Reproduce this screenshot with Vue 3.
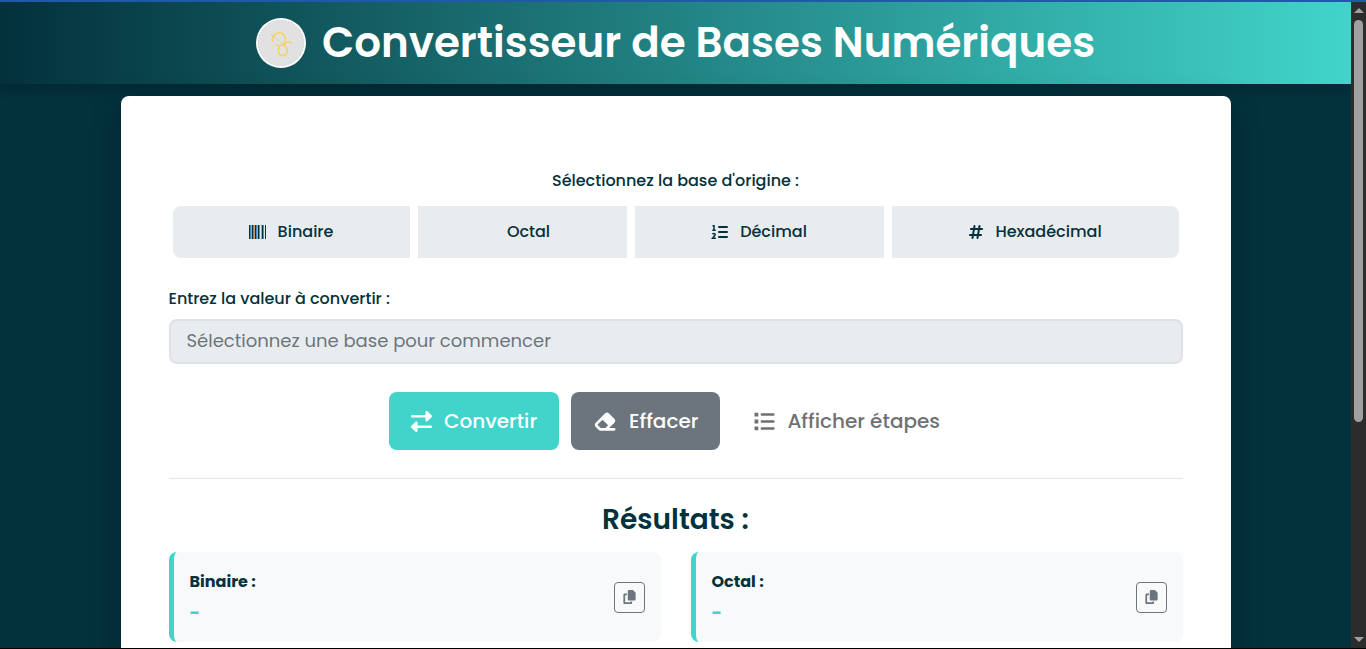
<template>
  <div class="window">
    <div class="page">
      <header class="header">
        <svg class="logo" viewBox="0 0 50 50" aria-hidden="true">
          <circle cx="25" cy="25" r="25" fill="#fff" />
          <circle cx="25" cy="25" r="22.8" fill="#e1e1e1" stroke="#b4bdc0" stroke-width="0.6" stroke-dasharray="2 1" />
          <g fill="none" stroke="#f6d35c" stroke-width="1.5">
            <path d="M17 24c-2-5 2-9.500 6.500-9.200 5 .4 7.500 6 5 10.200-2 3-6 3.500-8.500 1.500" />
            <path d="M23.500 28.500c-2.500 4-1 9.200 3.200 9.200 4.500 0 6-5 3.500-8.700" />
            <path d="M29 29c-1-5 4.500-7 6.500-3" />
          </g>
          <path d="M15 16l14 12" stroke="#c4c6c6" stroke-width="1" stroke-dasharray="2 2" />
        </svg>
        <h1 class="title">Convertisseur de Bases Numériques</h1>
      </header>

      <main class="card">
        <p id="base-label" class="base-label">Sélectionnez la base d'origine :</p>
        <div class="base-group" role="group" aria-labelledby="base-label">
          <button
            v-for="base in bases"
            :key="base.id"
            type="button"
            class="base-btn"
            @click="selected = base"
          >
            <svg v-if="base.id === 'bin'" class="base-icon" viewBox="0 0 18 14" aria-hidden="true">
              <path d="M0 0h1v14H0zM3 0h1v14H3zM6 0h1v14H6zM9 0h1v14H9zM13 0h1v14h-1zM16 0h1v14h-1z" fill="#03313c" />
              <path d="M2 0h1v14H2zM5 0h1v14H5zM8 0h1v14H8zM12 0h1v14h-1z" fill="#d09a68" />
              <path d="M1 0h1v14H1zM4 0h1v14H4zM7 0h1v14H7zM10 0h1v14h-1zM14 0h1v14h-1z" fill="#3e93c8" />
            </svg>
            <span v-else-if="base.id === 'oct'" class="base-icon empty"></span>
            <svg v-else-if="base.id === 'dec'" class="base-icon" viewBox="0 0 18 14" aria-hidden="true">
              <g fill="none" stroke="currentColor">
                <path d="M8 2h8M8 7h8M8 12h8" stroke-width="2" stroke-linecap="round" />
                <path d="M1.500 .8h1.500v4.500M1.300 5.300h3.400M1.500 9.300c1-1.200 3-.8 2.600.6L1.500 13.200h3.400" stroke-width="1.500" />
              </g>
            </svg>
            <svg v-else class="base-icon hash" viewBox="0 0 448 512" aria-hidden="true">
              <path fill="currentColor" d="M181.3 32.4c17.4 2.9 29.2 19.4 26.3 36.8L197.8 128h95.1l11.5-69.3c2.9-17.4 19.4-29.2 36.8-26.3s29.2 19.4 26.3 36.8L357.8 128H416c17.7 0 32 14.3 32 32s-14.3 32-32 32H347.1L325.8 320H384c17.7 0 32 14.3 32 32s-14.3 32-32 32H315.1l-11.5 69.3c-2.9 17.4-19.4 29.2-36.8 26.3s-29.2-19.4-26.3-36.8l9.8-58.7H155.1l-11.5 69.3c-2.9 17.4-19.4 29.2-36.8 26.3s-29.2-19.4-26.3-36.8L90.2 384H32c-17.7 0-32-14.3-32-32s14.3-32 32-32h68.9l21.3-128H64c-17.7 0-32-14.3-32-32s14.3-32 32-32h68.9l11.5-69.3c2.9-17.4 19.4-29.2 36.8-26.3zM187.1 192L165.8 320h95.1l21.3-128H187.1z" />
            </svg>
            <span>{{ base.name }}</span>
          </button>
        </div>

        <label class="value-label" for="value">Entrez la valeur à convertir :</label>
        <input
          id="value"
          v-model="value"
          class="value-input"
          type="text"
          :disabled="!selected"
          :placeholder="selected ? 'Entrez une valeur' : 'Sélectionnez une base pour commencer'"
        />

        <div class="actions">
          <button type="button" class="action convert">
            <svg class="action-icon" viewBox="0 0 512 512" aria-hidden="true">
              <path fill="currentColor" d="M32 96l320 0V32c0-12.9 7.8-24.6 19.8-29.6s25.7-2.2 34.9 6.9l96 96c6 6 9.4 14.1 9.4 22.6s-3.4 16.6-9.4 22.6l-96 96c-9.2 9.2-22.9 11.9-34.9 6.9s-19.8-16.6-19.8-29.6V160L32 160c-17.7 0-32-14.3-32-32s14.3-32 32-32zM480 352c17.7 0 32 14.3 32 32s-14.3 32-32 32H160v64c0 12.9-7.8 24.6-19.8 29.6s-25.7 2.2-34.9-6.9l-96-96c-6-6-9.4-14.1-9.4-22.6s3.4-16.6 9.4-22.6l96-96c9.2-9.2 22.9-11.9 34.9-6.9s19.8 16.6 19.8 29.6l0 64H480z" />
            </svg>
            Convertir
          </button>
          <button type="button" class="action clear" @click="value = ''">
            <svg class="action-icon eraser" viewBox="0 0 576 512" aria-hidden="true">
              <path fill="currentColor" d="M290.7 57.4L57.4 290.7c-25 25-25 65.5 0 90.5l80 80c12 12 28.3 18.7 45.3 18.7H288h9.4H512c17.7 0 32-14.3 32-32s-14.3-32-32-32H387.9L518.6 285.3c25-25 25-65.5 0-90.5L381.3 57.4c-25-25-65.5-25-90.5 0zM297.4 416H288l-105.4 0-80-80L227.3 211.3 364.7 348.7 297.4 416z" />
            </svg>
            Effacer
          </button>
          <button type="button" class="action steps" disabled>
            <svg class="action-icon" viewBox="0 0 20 20" aria-hidden="true">
              <path d="M.5 1.600h3.600v3.600H.5zM.5 8.200h3.600v3.600H.5zM.5 14.800h3.600v3.600H.5z" fill="currentColor" />
              <path d="M7.500 3.400h11M7.500 10h11M7.500 16.600h11" fill="none" stroke="currentColor" stroke-width="2.4" stroke-linecap="round" />
            </svg>
            Afficher étapes
          </button>
        </div>

        <hr class="divider" />

        <h2 class="results-title">Résultats :</h2>
        <div class="results">
          <section v-for="result in results" :key="result.name" class="result">
            <div>
              <h3 class="result-name">{{ result.name }} :</h3>
              <p class="result-value">{{ result.value }}</p>
            </div>
            <button type="button" class="copy-btn" :aria-label="'Copier ' + result.name">
              <svg class="copy-icon" viewBox="0 0 448 512" aria-hidden="true">
                <path fill="currentColor" d="M208 0H332.1c12.7 0 24.9 5.1 33.9 14.1l67.9 67.9c9 9 14.1 21.2 14.1 33.9V336c0 26.5-21.5 48-48 48H208c-26.5 0-48-21.5-48-48V48c0-26.5 21.5-48 48-48zM48 128h80v64H64V448H256V416h64v48c0 26.5-21.5 48-48 48H48c-26.5 0-48-21.5-48-48V176c0-26.5 21.5-48 48-48z" />
              </svg>
            </button>
          </section>
        </div>
      </main>
    </div>

    <div class="scrollbar" aria-hidden="true">
      <span class="arrow up"></span>
      <span class="track"><span class="thumb"></span></span>
      <span class="arrow down"></span>
    </div>
  </div>
</template>

<script setup>
import { ref } from 'vue'

const bases = [
  { id: 'bin', name: 'Binaire' },
  { id: 'oct', name: 'Octal' },
  { id: 'dec', name: 'Décimal' },
  { id: 'hex', name: 'Hexadécimal' },
]

const results = ref([
  { name: 'Binaire', value: '-' },
  { name: 'Octal', value: '-' },
])

const selected = ref(null)
const value = ref('')
</script>

<style>
body {
  margin: 0;
  background: #03313c;
}
</style>

<style scoped>
* {
  box-sizing: border-box;
}

.window {
  display: flex;
  height: 100vh;
  border-top: 2px solid #1e5aa8;
  border-bottom: 1px solid #000;
  font-family: Poppins, Inter, sans-serif;
  font-size: 16px;
  line-height: 24px;
  color: #03313c;
}

button,
input {
  font: inherit;
}

.page {
  flex: 1;
  min-width: 0;
  display: flex;
  flex-direction: column;
  overflow: hidden;
  background: #03313c;
}

.header {
  display: flex;
  flex: none;
  align-items: center;
  justify-content: center;
  gap: 16px;
  padding: 16px;
  background: linear-gradient(90deg, #03313c, #41d4ca);
  box-shadow: 0 4px 12px rgba(0, 0, 0, 0.2);
}

.logo {
  width: 50px;
  height: 50px;
}

.title {
  margin: 0;
  font-size: 42px;
  font-weight: 600;
  line-height: 50px;
  color: #fff;
}

.card {
  flex: 1 0 auto;
  width: calc(100% - 32px);
  max-width: 1110px;
  margin: 12px auto 0;
  padding: 73px 48px 48px;
  border-radius: 8px;
  background: #fff;
  box-shadow: 0 8px 32px rgba(0, 0, 0, 0.2);
}

.base-label {
  margin: 0 0 13px;
  font-weight: 500;
  text-align: center;
}

.base-group {
  display: grid;
  grid-template-columns: 237fr 209fr 249fr 287fr;
  gap: 8px;
  margin: 0 4px 29px;
}

.base-btn {
  display: flex;
  align-items: center;
  justify-content: center;
  gap: 11px;
  height: 52px;
  padding: 0;
  border: 0;
  background: #e9ecef;
  color: #03313c;
  font-weight: 500;
}

.base-btn:first-child {
  border-radius: 8px 0 0 8px;
}

.base-btn:last-child {
  border-radius: 0 8px 8px 0;
}

.base-icon {
  width: 18px;
  height: 14px;
}

.base-icon.hash {
  width: 16px;
  height: 16px;
}

.base-icon.empty {
  width: 2px;
}

.value-label {
  display: block;
  margin-bottom: 8px;
  font-weight: 500;
}

.value-input {
  display: block;
  width: 100%;
  height: 45px;
  padding: 0 16px 2px;
  border: 2px solid #dee2e6;
  border-radius: 8px;
  background: #e9ecef;
  font-size: 18px;
}

.value-input::placeholder {
  color: #6c757d;
  opacity: 1;
}

.actions {
  display: flex;
  justify-content: center;
  gap: 12px;
  margin-top: 28px;
}

.action {
  display: flex;
  align-items: center;
  justify-content: center;
  gap: 12px;
  height: 58px;
  padding: 0 22px;
  border: 0;
  border-radius: 8px;
  color: #fff;
  font-size: 20px;
  font-weight: 500;
}

.convert {
  background: #41d4ca;
}

.clear {
  background: #6c757d;
}

.steps {
  background: transparent;
  color: #212529;
  opacity: 0.65;
}

.action-icon {
  width: 21px;
  height: 21px;
}

.action-icon.eraser {
  width: 24px;
}

.divider {
  height: 1px;
  margin: 28px 0 24px;
  border: 0;
  background: #e3e5e6;
}

.results-title {
  margin: 0 0 16px;
  font-size: 28px;
  font-weight: 600;
  line-height: 33px;
  text-align: center;
}

.results {
  display: grid;
  grid-template-columns: 1fr 1fr;
  gap: 30px;
}

.result {
  display: flex;
  align-items: center;
  justify-content: space-between;
  height: 90px;
  padding: 0 16px;
  border-left: 5px solid #41d4ca;
  border-radius: 8px;
  background: #f8f9fb;
}

.result-name {
  margin: 0 0 8px;
  font-size: 16px;
  font-weight: 700;
  line-height: 24px;
}

.result-value {
  margin: 0;
  color: #41d4ca;
  font-size: 18px;
  font-weight: 700;
  line-height: 22px;
}

.copy-btn {
  display: grid;
  place-items: center;
  width: 31px;
  height: 31px;
  padding: 0;
  border: 1px solid #6c757d;
  border-radius: 4px;
  background: transparent;
  color: #6c757d;
}

.copy-icon {
  width: 13px;
  height: 14px;
}

.scrollbar {
  display: flex;
  flex: none;
  flex-direction: column;
  align-items: center;
  width: 15px;
  padding: 6px 0;
  background: #2c2c2c;
}

.arrow {
  border: 5px solid transparent;
}

.arrow.up {
  border-top: 0;
  border-bottom-color: #a0a0a0;
}

.arrow.down {
  border-bottom: 0;
  border-top-color: #a0a0a0;
}

.track {
  flex: 1;
  width: 9px;
  margin: 7px 0 8px;
}

.thumb {
  display: block;
  height: 66%;
  border-radius: 5px;
  background: #a0a0a0;
}
</style>
